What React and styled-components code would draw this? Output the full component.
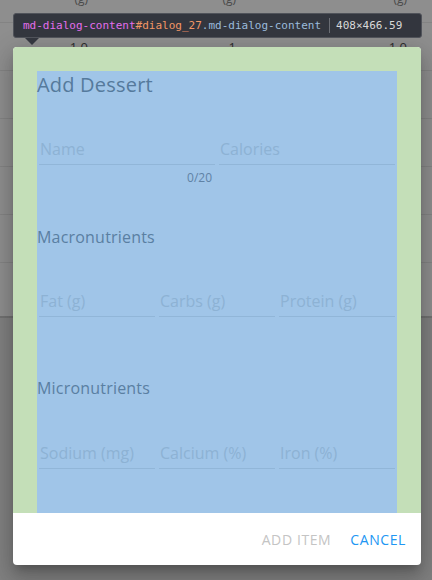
import React from 'react';
import styled, { createGlobalStyle } from 'styled-components';

const GlobalStyle = createGlobalStyle`
  html, body {
    margin: 0;
    padding: 0;
  }
  body {
    width: 432px;
    height: 580px;
    overflow: hidden;
    background: #808080;
    font-family: 'Open Sans', 'Liberation Sans', sans-serif;
  }
`;

const Page = styled.div`
  position: relative;
  width: 432px;
  height: 580px;
  overflow: hidden;
`;

const TableCard = styled.div`
  margin-top: -25px;
  height: 343px;
  background: #8e8e8e;
  border-bottom: 2px solid #717171;
  box-sizing: border-box;
`;

const Row = styled.div`
  display: grid;
  grid-template-columns: 88px 148px 171px;
  align-items: center;
  height: 48px;
  border-bottom: 1px solid #838383;
  box-sizing: border-box;
  font-size: ${props => (props.head ? '12px' : '13px')};
  color: ${props => (props.head ? '#4a4a4a' : '#2c2c2c')};
`;

const Cell = styled.div`
  text-align: right;
`;

const Tooltip = styled.div`
  position: absolute;
  top: 13px;
  left: 13px;
  width: 409px;
  height: 25px;
  box-sizing: border-box;
  padding: 0 9px;
  display: flex;
  align-items: center;
  background: #33363e;
  border: 1px solid #50535a;
  border-radius: 3px;
  font-family: 'DejaVu Sans Mono', 'Liberation Mono', monospace;
  font-size: 11px;
  white-space: nowrap;
  z-index: 3;

  &::after {
    content: '';
    position: absolute;
    left: 11px;
    bottom: -8px;
    border-left: 7px solid transparent;
    border-right: 7px solid transparent;
    border-top: 7px solid #33363e;
  }
`;

const Tok = styled.span`
  color: ${props => props.color};
`;

const Divider = styled.span`
  width: 1px;
  height: 15px;
  background: #6a6d74;
  margin: 0 6px 0 8px;
`;

const Dialog = styled.div`
  position: absolute;
  top: 47px;
  left: 13px;
  width: 408px;
  border-radius: 4px;
  overflow: hidden;
  background: #fff;
  box-shadow: 0 7px 8px -4px rgba(0, 0, 0, 0.2), 0 13px 19px 2px rgba(0, 0, 0, 0.14),
    0 5px 24px 4px rgba(0, 0, 0, 0.12);
  z-index: 2;
`;

const DialogContent = styled.div`
  height: 466px;
  box-sizing: border-box;
  padding: 24px 24px 0;
  background: #c4dfb8;
  overflow: hidden;
`;

const ContentBox = styled.div`
  height: 442px;
  background: #a0c5e8;
`;

const Title = styled.h2`
  margin: 0;
  font-size: 20px;
  font-weight: 400;
  line-height: 28px;
  letter-spacing: 0.2px;
  color: #557a9c;
`;

const Section = styled.h3`
  margin: ${props => props.top}px 0 0;
  font-size: 16px;
  font-weight: 400;
  line-height: 24px;
  letter-spacing: 0.2px;
  color: #5a7fa2;
`;

const FieldRow = styled.div`
  display: grid;
  grid-template-columns: repeat(${props => props.cols}, minmax(0, 1fr));
  margin-top: ${props => props.top}px;
`;

const Field = styled.div`
  min-width: 0;
  padding: 0 2px;
  display: flex;
  flex-direction: column;
`;

const Input = styled.input`
  width: 100%;
  min-width: 0;
  height: 31px;
  box-sizing: border-box;
  padding: 0 1px 1px;
  border: none;
  border-bottom: 1px solid #91b6d8;
  background: transparent;
  font-family: inherit;
  font-size: 16px;
  color: #557a9c;
  outline: none;

  &::placeholder {
    color: #8db2d4;
  }
`;

const Counter = styled.div`
  margin-top: 6px;
  padding-right: 3px;
  text-align: right;
  font-size: 12px;
  line-height: 14px;
  color: #5f82a5;
`;

const Actions = styled.div`
  height: 52px;
  display: flex;
  align-items: center;
  justify-content: flex-end;
  gap: 19px;
  padding-right: 15px;
`;

const TextButton = styled.button`
  border: none;
  background: none;
  padding: 0;
  font-family: inherit;
  font-size: 14px;
  letter-spacing: 0.6px;
  text-transform: uppercase;
  color: ${props => (props.primary ? '#2196f3' : '#c4c4c4')};
  cursor: ${props => (props.disabled ? 'default' : 'pointer')};
`;

const rows = [
  { head: true, cells: ['(g)', '(g)', '(g)'] },
  { cells: ['1.0', '1', '1.0'] },
  { cells: ['2.0', '8', '2.0'] },
  { cells: ['6.0', '7', '6.0'] },
  { cells: ['4.3', '6', '4.3'] },
  { cells: ['3.9', '4', '3.9'] },
];

export default function App() {
  return (
    <Page>
      <GlobalStyle />
      <TableCard>
        {rows.map((r, i) => (
          <Row key={i} head={r.head}>
            {r.cells.map((c, j) => (
              <Cell key={j}>{c}</Cell>
            ))}
          </Row>
        ))}
      </TableCard>

      <Tooltip>
        <Tok color="#e36eec">md-dialog-content</Tok>
        <Tok color="#f29766">#dialog_27</Tok>
        <Tok color="#9bbbdc">.md-dialog-content</Tok>
        <Divider />
        <Tok color="#d9d9d9">408×466.59</Tok>
      </Tooltip>

      <Dialog>
        <DialogContent>
          <ContentBox>
            <Title>Add Dessert</Title>
            <FieldRow cols={2} top={35}>
              <Field>
                <Input placeholder="Name" />
                <Counter>0/20</Counter>
              </Field>
              <Field>
                <Input placeholder="Calories" />
              </Field>
            </FieldRow>
            <Section top={40}>Macronutrients</Section>
            <FieldRow cols={3} top={37}>
              <Field><Input placeholder="Fat (g)" /></Field>
              <Field><Input placeholder="Carbs (g)" /></Field>
              <Field><Input placeholder="Protein (g)" /></Field>
            </FieldRow>
            <Section top={59}>Micronutrients</Section>
            <FieldRow cols={3} top={38}>
              <Field><Input placeholder="Sodium (mg)" /></Field>
              <Field><Input placeholder="Calcium (%)" /></Field>
              <Field><Input placeholder="Iron (%)" /></Field>
            </FieldRow>
          </ContentBox>
        </DialogContent>
        <Actions>
          <TextButton disabled>Add item</TextButton>
          <TextButton primary>Cancel</TextButton>
        </Actions>
      </Dialog>
    </Page>
  );
}
